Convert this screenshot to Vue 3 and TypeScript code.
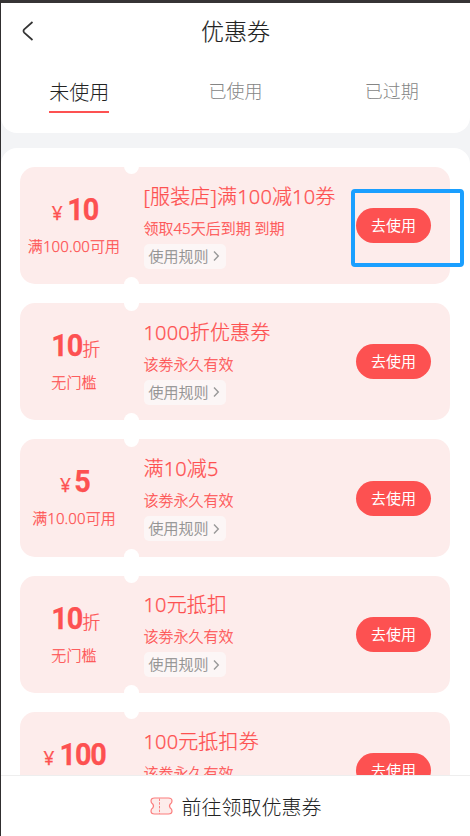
<script setup lang="ts">
import { ref } from 'vue'

interface Coupon {
  id: number
  prefix?: string
  value: string
  suffix?: string
  condition?: string
  title: string
  validity: string
}

const tabs: string[] = ['未使用', '已使用', '已过期']
const active = ref(0)

const coupons: Coupon[] = [
  { id: 1, prefix: '¥', value: '10', condition: '满100.00可用', title: '[服装店]满100减10券', validity: '领取45天后到期 到期' },
  { id: 2, value: '10', suffix: '折', condition: '无门槛', title: '1000折优惠券', validity: '该劵永久有效' },
  { id: 3, prefix: '¥', value: '5', condition: '满10.00可用', title: '满10减5', validity: '该劵永久有效' },
  { id: 4, value: '10', suffix: '折', condition: '无门槛', title: '10元抵扣', validity: '该劵永久有效' },
  { id: 5, prefix: '¥', value: '100', title: '100元抵扣券', validity: '该劵永久有效' },
]
</script>

<template>
  <div class="page">
    <header class="header">
      <div class="navbar">
        <svg class="back" viewBox="0 0 12 20" width="12" height="20">
          <path d="M10.5 1 L2.2 8.4 Q0.8 10 2.2 11.6 L10.5 19" />
        </svg>
        <h1 class="heading">优惠券</h1>
      </div>
      <nav class="tabs">
        <div v-for="(tab, i) in tabs" :key="tab" class="tab" @click="active = i">
          <span class="tab-label" :class="{ active: i === active }">{{ tab }}</span>
        </div>
      </nav>
    </header>

    <main class="list">
      <article v-for="c in coupons" :key="c.id" class="coupon">
        <i class="notch top"></i>
        <i class="notch bottom"></i>
        <div class="face">
          <div class="amount">
            <span v-if="c.prefix" class="prefix">{{ c.prefix }}</span>
            <span class="value">{{ c.value }}</span>
            <span v-if="c.suffix" class="suffix">{{ c.suffix }}</span>
          </div>
          <div v-if="c.condition" class="condition">{{ c.condition }}</div>
        </div>
        <div class="info">
          <div class="title">{{ c.title }}</div>
          <div class="validity">{{ c.validity }}</div>
          <div v-if="c.condition" class="rules">
            <span>使用规则</span>
            <svg class="chevron" viewBox="0 0 7 12" width="7" height="12">
              <path d="M1 1.5 L5.3 6 L1 10.5" />
            </svg>
          </div>
        </div>
        <button class="use">去使用</button>
      </article>
      <div class="highlight"></div>
    </main>

    <footer class="footer">
      <svg class="ticket" viewBox="0 0 23 18" width="23" height="18">
        <path class="outline" d="M4.5 1 H18.5 Q22 1 22 4 Q22 6 20.3 7 Q18.6 9 20.3 11 Q22 12 22 14 Q22 17 18.5 17 H4.5 Q1 17 1 14 Q1 12 2.7 11 Q4.4 9 2.7 7 Q1 6 1 4 Q1 1 4.5 1 Z" />
        <path class="dash" d="M9.5 1.5 V17" />
      </svg>
      <span>前往领取优惠券</span>
    </footer>
  </div>
</template>

<style>
body {
  overflow: hidden;
}
</style>

<style scoped>
.page {
  box-sizing: border-box;
  display: flex;
  flex-direction: column;
  width: 470px;
  height: 836px;
  border-top: 3px solid #363435;
  border-left: 1px solid #302e2f;
  background: #f3f4f6;
  overflow: hidden;
  font-family: "Noto Sans", "Noto Sans CJK SC", sans-serif;
  font-weight: 300;
}
.header {
  flex: none;
  height: 130px;
  border-radius: 0 0 16px 16px;
  background: #fff;
}
.navbar {
  display: flex;
  align-items: center;
  height: 56px;
  padding-left: 21px;
}
.back {
  fill: none;
  stroke: #333;
  stroke-width: 1.7;
}
.heading {
  flex: 1;
  margin: 0;
  padding-right: 33px;
  text-align: center;
  font-size: 23px;
  font-weight: 300;
  line-height: 55px;
  color: #222;
  -webkit-text-stroke: 0.15px currentColor;
}
.tabs {
  display: flex;
}
.tab {
  flex: 1;
  display: flex;
  justify-content: center;
}
.tab-label {
  height: 52px;
  line-height: 65px;
  font-size: 18px;
  color: #858585;
}
.tab-label.active {
  line-height: 67px;
  font-size: 20px;
  color: #222;
  border-bottom: 2px solid #fd5151;
}
.list {
  position: relative;
  flex: 1;
  min-height: 0;
  margin-top: 15px;
  padding: 18.8px 20px 0 19px;
  border-radius: 16px 16px 0 0;
  background: #fff;
  overflow: hidden;
}
.coupon {
  position: relative;
  display: flex;
  box-sizing: border-box;
  width: 430px;
  height: 117.3px;
  margin-bottom: 19px;
  border-radius: 15px;
  background: #fdeceb;
  color: #fd5151;
  -webkit-text-stroke: 0.25px currentColor;
}
.notch {
  position: absolute;
  left: 104px;
  width: 15px;
  height: 15px;
  border-radius: 50%;
  background: #fff;
}
.notch.top {
  top: -7.5px;
}
.notch.bottom {
  bottom: -7.5px;
}
.face {
  width: 108px;
  padding-top: 25px;
  text-align: center;
  white-space: nowrap;
}
.amount {
  display: flex;
  justify-content: center;
  align-items: baseline;
  height: 39px;
  padding-left: 1.5px;
  line-height: 36px;
}
.prefix {
  margin-right: 2px;
  font-size: 19px;
  font-weight: 400;
}
.value {
  font-family: Roboto, "Liberation Sans", sans-serif;
  font-size: 31px;
  font-weight: 700;
  letter-spacing: -1.2px;
  transform: scaleX(0.93);
  transform-origin: right;
}
.suffix {
  font-size: 18px;
}
.condition {
  font-size: 15px;
  line-height: 30px;
  letter-spacing: 0.1px;
}
.info {
  flex: 1;
  padding: 13.8px 0 0 15.5px;
  white-space: nowrap;
}
.title {
  font-size: 20px;
  line-height: 32px;
  letter-spacing: 0.15px;
}
.validity {
  font-size: 15px;
  line-height: 31px;
}
.rules {
  display: inline-flex;
  align-items: center;
  gap: 4px;
  box-sizing: border-box;
  width: 82px;
  height: 25px;
  padding-left: 5px;
  border-radius: 5px;
  background: #fcf6f6;
  font-size: 15px;
  line-height: 25px;
  color: #8f8f8f;
}
.chevron {
  fill: none;
  stroke: #999;
  stroke-width: 1.4;
}
.use {
  align-self: center;
  flex: none;
  width: 75px;
  height: 35px;
  margin: 0 19px 0 0;
  padding: 0;
  border: 0;
  border-radius: 18px;
  background: #fd5151;
  color: #fff;
  font-family: inherit;
  font-size: 15px;
  line-height: 35px;
  -webkit-text-stroke: 0;
}
.highlight {
  position: absolute;
  left: 350px;
  top: 41px;
  box-sizing: border-box;
  width: 113px;
  height: 78px;
  border: 4px solid #1a9fff;
  border-radius: 4px;
}
.footer {
  flex: none;
  display: flex;
  justify-content: center;
  align-items: center;
  gap: 9px;
  box-sizing: border-box;
  height: 61px;
  border-top: 1px solid #eee;
  background: #fff;
  font-size: 20px;
  color: #222;
}
.ticket .outline {
  fill: #fdeceb;
  stroke: #fb7d7d;
  stroke-width: 1.2;
}
.ticket .dash {
  fill: none;
  stroke: #fb8585;
  stroke-width: 1;
  stroke-dasharray: 2.5 1.2;
}
</style>
